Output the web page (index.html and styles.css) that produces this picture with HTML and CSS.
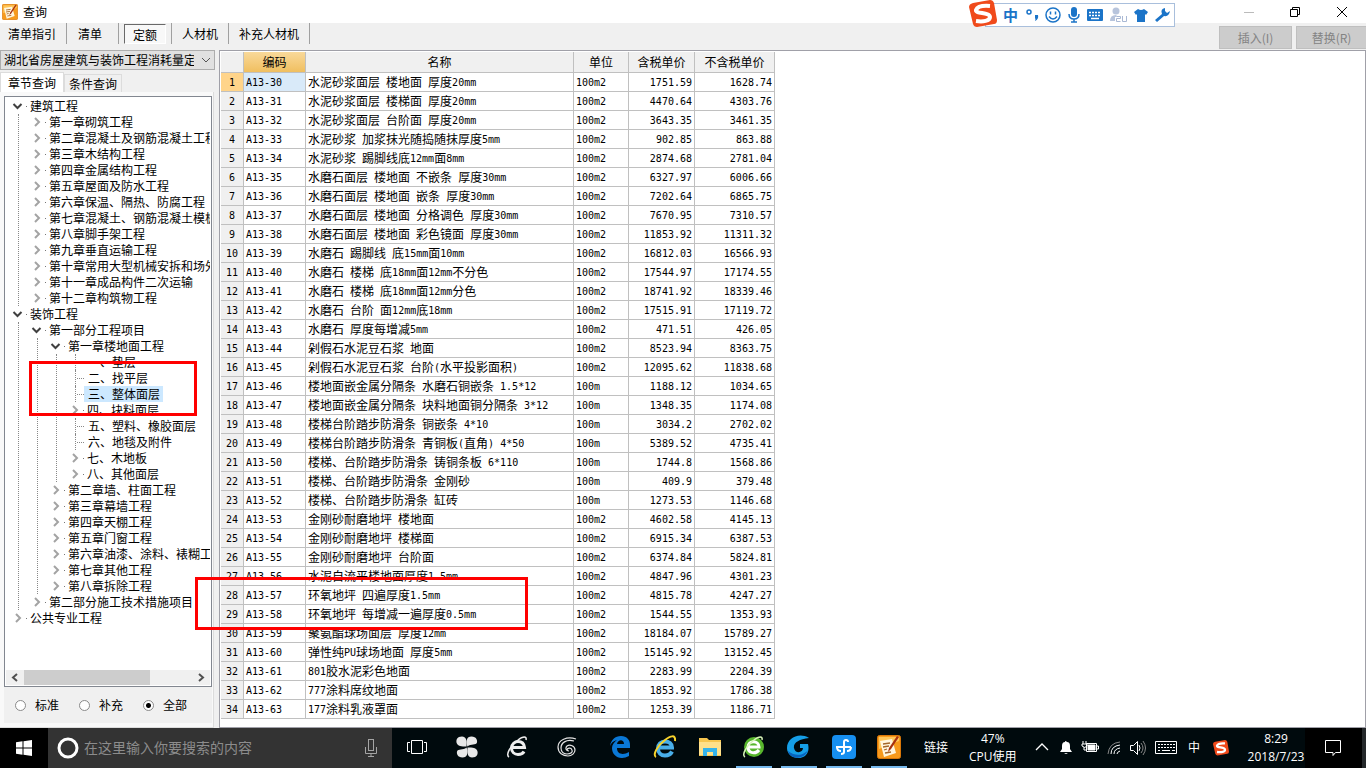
FILE: index.html
```html
<!DOCTYPE html>
<html lang="zh-CN">
<head>
<meta charset="utf-8">
<title>查询</title>
<link rel="stylesheet" href="styles.css">
</head>
<body>
<svg class="defs" aria-hidden="true">
  <symbol id="open" viewBox="0 0 19 16"><path d="M5.500 6l4 4 4-4" fill="none" stroke="#404040" stroke-width="2"/><path d="M18 8h1v1h-1z" fill="#777"/></symbol>
  <symbol id="shut" viewBox="0 0 19 16"><path d="M8 4l4 4-4 4" fill="none" stroke="#a3a3a3" stroke-width="2"/><path d="M18 8h1v1h-1z" fill="#777"/></symbol>
  <symbol id="note" viewBox="0 0 24 24"><rect x=".5" y=".5" width="23" height="23" rx="2" fill="#f79a1c" stroke="#d97708"/><path d="M2 2h20v4L2 14z" fill="#ffc65a"/><path d="M3 6l12-2 4 14-12 4z" fill="#fff6df"/><path d="M6 9l7-1M6 12l6-1M7 15l3-1M8 18l6-1" stroke="#a5672a" stroke-width="1.300"/><path d="M20 1l2 1-8 12-3 3 1-4z" fill="#a83210"/></symbol>
  <symbol id="sogou" viewBox="0 0 28 28"><path d="M4 3l17-3q3 0 4 3l3 17q0 4-3 4L8 27q-3 0-4-3L0 7q0-3 4-4z" fill="#f04a1b"/><path d="M21 6Q9 5 7 10c-1 4 14 2 14 7 0 4-7 5-14 4" fill="none" stroke="#fff" stroke-width="4"/></symbol>
</svg>

<header class="titlebar">
  <svg class="app-icon"><use href="#note"/></svg>
  <h1>查询</h1>
  <div class="window-controls">
    <button aria-label="最小化"><svg width="12" height="12"><path d="M1 6.500h10" stroke="#bbb"/></svg></button>
    <button aria-label="还原"><svg width="12" height="12" fill="none" stroke="#000"><path d="M1.500 3.500h7v7h-7zM3.500 3V1.500h7v7H9"/></svg></button>
    <button aria-label="关闭"><svg width="12" height="12"><path d="M1 1l10 10M11 1L1 11" stroke="#000"/></svg></button>
  </div>
</header>

<nav class="toolbar">
  <button>清单指引</button>
  <button>清单</button>
  <button class="pressed"><span>定额</span></button>
  <button>人材机</button>
  <button>补充人材机</button>
  <div class="actions">
    <button disabled>插入(I)</button>
    <button disabled>替换(R)</button>
  </div>
</nav>

<main class="workspace">
  <aside class="sidebar">
    <select class="library" aria-label="定额库"><option>湖北省房屋建筑与装饰工程消耗量定额</option></select>
    <div class="tabs"><button class="active">章节查询</button><button>条件查询</button></div>
    <section class="panel">
      <div class="tree-box">
        <ul class="tree">
          <li><p><svg><use href="#open"/></svg><span>建筑工程</span></p>
            <ul>
              <li><p><svg><use href="#shut"/></svg><span>第一章砌筑工程</span></p></li>
              <li><p><svg><use href="#shut"/></svg><span>第二章混凝土及钢筋混凝土工程</span></p></li>
              <li><p><svg><use href="#shut"/></svg><span>第三章木结构工程</span></p></li>
              <li><p><svg><use href="#shut"/></svg><span>第四章金属结构工程</span></p></li>
              <li><p><svg><use href="#shut"/></svg><span>第五章屋面及防水工程</span></p></li>
              <li><p><svg><use href="#shut"/></svg><span>第六章保温、隔热、防腐工程</span></p></li>
              <li><p><svg><use href="#shut"/></svg><span>第七章混凝土、钢筋混凝土模板</span></p></li>
              <li><p><svg><use href="#shut"/></svg><span>第八章脚手架工程</span></p></li>
              <li><p><svg><use href="#shut"/></svg><span>第九章垂直运输工程</span></p></li>
              <li><p><svg><use href="#shut"/></svg><span>第十章常用大型机械安拆和场外</span></p></li>
              <li><p><svg><use href="#shut"/></svg><span>第十一章成品构件二次运输</span></p></li>
              <li><p><svg><use href="#shut"/></svg><span>第十二章构筑物工程</span></p></li>
            </ul>
          </li>
          <li><p><svg><use href="#open"/></svg><span>装饰工程</span></p>
            <ul>
              <li><p><svg><use href="#open"/></svg><span>第一部分工程项目</span></p>
                <ul>
                  <li><p><svg><use href="#open"/></svg><span>第一章楼地面工程</span></p>
                    <ul>
                      <li><p class="leaf"><span>一、垫层</span></p></li>
                      <li><p class="leaf"><span>二、找平层</span></p></li>
                      <li><p class="leaf"><span class="selected">三、整体面层</span></p></li>
                      <li><p><svg><use href="#shut"/></svg><span>四、块料面层</span></p></li>
                      <li><p class="leaf"><span>五、塑料、橡胶面层</span></p></li>
                      <li><p class="leaf"><span>六、地毯及附件</span></p></li>
                      <li><p><svg><use href="#shut"/></svg><span>七、木地板</span></p></li>
                      <li><p><svg><use href="#shut"/></svg><span>八、其他面层</span></p></li>
                    </ul>
                  </li>
                  <li><p><svg><use href="#shut"/></svg><span>第二章墙、柱面工程</span></p></li>
                  <li><p><svg><use href="#shut"/></svg><span>第三章幕墙工程</span></p></li>
                  <li><p><svg><use href="#shut"/></svg><span>第四章天棚工程</span></p></li>
                  <li><p><svg><use href="#shut"/></svg><span>第五章门窗工程</span></p></li>
                  <li><p><svg><use href="#shut"/></svg><span>第六章油漆、涂料、裱糊工程</span></p></li>
                  <li><p><svg><use href="#shut"/></svg><span>第七章其他工程</span></p></li>
                  <li><p><svg><use href="#shut"/></svg><span>第八章拆除工程</span></p></li>
                </ul>
              </li>
              <li><p><svg><use href="#shut"/></svg><span>第二部分施工技术措施项目</span></p></li>
            </ul>
          </li>
          <li><p><svg><use href="#shut"/></svg><span>公共专业工程</span></p></li>
        </ul>
        <div class="scrollbar">
          <svg width="18" height="15"><path d="M11 4L7 7.500l4 3.500" fill="none" stroke="#505050" stroke-width="2"/></svg>
          <div class="track"><div class="thumb"></div></div>
          <svg width="18" height="15"><path d="M7 4l4 3.500L7 11" fill="none" stroke="#505050" stroke-width="2"/></svg>
        </div>
      </div>
      <div class="scope">
        <label><input type="radio" name="scope">标准</label>
        <label><input type="radio" name="scope">补充</label>
        <label><input type="radio" name="scope" checked>全部</label>
      </div>
    </section>
  </aside>

  <section class="results">
    <table>
      <colgroup><col class="c-no"><col class="c-code"><col class="c-name"><col class="c-unit"><col class="c-tax"><col class="c-net"></colgroup>
      <thead><tr><th></th><th class="current">编码</th><th>名称</th><th>单位</th><th>含税单价</th><th>不含税单价</th></tr></thead>
      <tbody id="rows"></tbody>
    </table>
  </section>
</main>

<footer class="taskbar">
  <button class="start" aria-label="开始"><svg width="16" height="16" fill="#fff"><path d="M0 2.300l6.500-1v6.200H0zM7.500 1.200L16 0v7.500H7.500zM0 8.500h6.500v6.200l-6.500-1zM7.500 8.500H16V16l-8.500-1.200z"/></svg></button>
  <div class="search">
    <svg width="22" height="22"><circle cx="11" cy="11" r="9" fill="none" stroke="#fff" stroke-width="3"/></svg>
    <input type="text" placeholder="在这里输入你要搜索的内容" aria-label="搜索">
    <svg width="12" height="18" fill="none" stroke="#a5a5a5"><rect x="3.500" y=".5" width="5" height="11"/><path d="M.5 8v6.500h11V8M6 15v2M3 17.500h6"/></svg>
  </div>
  <div class="shortcuts">
    <button aria-label="任务视图"><svg width="20" height="14" fill="none" stroke="#fff"><path d="M4.500.5h11v13h-11zM3 2.500H.5v9H3M17 2.500h2.500v9H17"/></svg></button>
    <button aria-label="风扇"><svg width="22" height="22" fill="#e8e8e8"><path d="M10.500 10.500C11 4 10 .5 6 .5 1 .5 0 4 .5 6.500c1 4 5 4 10 4z"/><path d="M11.500 10.500c-2-5-1-10 4-10 5 0 6 4 5.500 6-1 3-6 1-9.500 4z"/><path d="M11.500 11.500c-.5 6.500.5 10 4.500 10 5 0 6-3.500 5.500-6-1-4-5-4-10-4z"/><path d="M10.500 11.500c2 5 1 10-4 10-5 0-6-4-5.500-6 1-3 6-1 9.500-4z"/></svg></button>
    <button aria-label="浏览器"><svg width="22" height="24" fill="none" stroke="#eee"><path d="M5.500 12.500H18.500C18 8 15 6.500 12 6.500S5.500 9 5.500 13s3 6.500 6.500 6.500c3 0 5-1 6-3" stroke-width="3"/><path d="M3 22C-1 20 5 10 12 5c5-4 9-4 8 0" stroke-width="1.500"/></svg></button>
    <button aria-label="旋涡"><svg width="20" height="20" fill="none" stroke="#e4e4e4" stroke-width="1.200"><path d="M19 2C10-1 1 3 1 10c0 6 5 9 10 9 4 0 7-3 7-6 0-4-5-6-8-4-2 2-1 5 2 5"/><path d="M17 4C9 2 4 6 4 11c0 4 3 6 6 6 4 0 6-2 5-4-1-3-5-2-5 0"/></svg></button>
    <button class="group-start" aria-label="Edge"><svg width="20" height="22" fill="#0a78d6"><path fill-rule="evenodd" d="M0 10C1 4 5 0 11 0c6 0 9 4 9 9v3H7c0 7 7 7 12 4v4c-9 5-17 0-17-8 0-3 2-6 5-8-4 1-6 3-7 6zm7-2h7c0-5-6-5-7 0z"/></svg></button>
    <button aria-label="Internet Explorer"><svg width="24" height="24" fill="none"><path d="M6 12.500h13c0-4-3-6-7-6s-7 3-7 7 3 7 7 7c4 0 6-2 7-4" stroke="#49aee9" stroke-width="4"/><path d="M3 22C-1 20 5 10 12 5c5-4 11-6 10 1" stroke="#f8d32b" stroke-width="2"/></svg></button>
    <button aria-label="文件资源管理器"><svg width="22" height="18"><path d="M0 0h8l2 2h12v16H0z" fill="#f7c64f"/><path d="M0 4h22v13H0z" fill="#ffe08a"/><path d="M4 18v-8h14v8h-4v-4H8v4z" fill="#35b3ea"/></svg></button>
    <button class="running" aria-label="安全浏览器"><svg width="24" height="24" fill="none"><circle cx="12" cy="12" r="10" fill="#58b62d"/><path d="M7 12h10c0-7-11-7-11 0 0 7 8 7 11 3" stroke="#fff" stroke-width="3"/><path d="M3 22C-1 20 5 10 12 5c5-4 9-4 8 0" stroke="#d8f5b8" stroke-width="1.500"/></svg></button>
    <button class="running" aria-label="广联达"><svg width="24" height="24"><path d="M22 3C12-3 0 3 0 13c0 6 5 10 11 10 8 0 12-6 10-14h-8v4h3c0 5-8 6-9 0C6 8 12 4 22 3z" fill="#159fe8"/><path d="M1 16c2 9 17 9 20-1-3 4-11 8-20 1z" fill="#0863bf"/></svg></button>
    <button class="running" aria-label="十字"><svg width="24" height="24" fill="none"><rect width="24" height="24" rx="4" fill="#168ff0"/><path d="M16 7q0-2-2-2t-2 2v10q0 2-3 2M4 12h15M5 12q0 4 4 4M19 12q0 4-4 4" stroke="#fff" stroke-width="2"/></svg></button>
    <button class="running" aria-label="计价软件"><svg width="24" height="24"><use href="#note"/></svg></button>
  </div>
  <div class="links">链接</div>
  <div class="cpu"><span>47%</span><span>CPU使用</span></div>
  <div class="tray">
    <svg fill="none" stroke="#fff" stroke-width="1.300"><path d="M6 13l6-6 6 6"/></svg>
    <svg fill="#fff"><path d="M6 15l2-3V9q0-4 3-4 0-2 2 0 3 0 3 4v3l2 3zM10 16h4l-2 1z"/></svg>
    <svg fill="none" stroke="#fff"><path d="M8.500 6.500h10v8h-10zM19 9h1.500v3H19M5 4v3M8 4v3M4 7h5v2q-2 3-5 0zM6 10v3h2"/><path d="M10 8h7v5h-7z" fill="#fff"/></svg>
    <svg fill="none" stroke="#fff"><path d="M6 17Q7 6 18 5" stroke="#888"/><path d="M9 17q0-8 9-9M12 17q0-5 6-6M15 17q0-2 3-3"/></svg>
    <svg fill="none" stroke="#fff"><path d="M4.500 8.500h3l4-4v13l-4-4h-3zM13 8q2 3 0 6"/><path d="M15 6q4 5 0 10M17 4q5 7 0 14" stroke="#888"/></svg>
    <svg class="wide" fill="none" stroke="#fff"><path d="M5.500 4.500h21v12h-21z"/><path d="M8 7.500h17M8 10.500h17" stroke-dasharray="2 1"/><path d="M8 13.500h2M12 13.500h8M22 13.500h3"/></svg>
    <span class="ime">中</span>
    <svg class="sogou-tray" viewBox="0 0 28 28"><use href="#sogou"/></svg>
  </div>
  <div class="clock"><span>8:29</span><span>2018/7/23</span></div>
  <button class="notices" aria-label="通知"><svg width="16" height="16" fill="none" stroke="#fff"><path d="M.5.500h15v12h-5l-2.500 3v-3H.5z"/></svg></button>
</footer>

<div class="ime-bar">
  <svg class="ime-logo"><use href="#sogou"/></svg>
  <span>中</span>
  <svg width="14" height="16"><circle cx="4" cy="5" r="2" fill="none" stroke="#1b74c8" stroke-width="1.500"/><path d="M10 8h3q1 4-3 6 1-2 0-3z" fill="#1b74c8"/></svg>
  <svg width="16" height="16" fill="none" stroke="#1b74c8" stroke-width="1.500"><circle cx="8" cy="8" r="7"/><path d="M5.500 4.500v3M10.500 4.500v3M4 9.500q4 5 8 0"/></svg>
  <svg width="12" height="16"><rect x="3" width="6" height="10" rx="3" fill="#1b74c8"/><path d="M1 7q0 5 5 5t5-5M6 12v3M3 15h6" fill="none" stroke="#1b74c8" stroke-width="1.500"/></svg>
  <svg width="16" height="16"><rect y="2" width="16" height="12" rx="1" fill="#1b74c8"/><path d="M2 5.500h12M2 8.500h12" stroke="#fff" stroke-width="1.500" stroke-dasharray="2 1"/><path d="M4 11.500h8" stroke="#fff" stroke-width="1.500"/></svg>
  <svg width="18" height="16" fill="#b7c4dc"><circle cx="6" cy="4" r="3.500"/><path d="M0 14q0-6 6-6h3v6z"/><path d="M6.500 9.500h4v2h-4v3h4M12.500 9v5.500h4V9" fill="none" stroke="#fff" stroke-width="3"/><path d="M6.500 9.500h4v2h-4v3h4M12.500 9v5.500h4V9" fill="none" stroke="#a9b8d4"/></svg>
  <svg width="14" height="16"><path d="M4 2q3 2 6 0l4 3-2 3-1-1v8H3V7L2 8 0 5z" fill="#1b74c8"/></svg>
  <svg width="15" height="16"><path d="M10 1q-5 1-3 6l-7 6 2 2 7-6q5 1 6-5l-3 2-2-2z" fill="#1b74c8"/></svg>
</div>
<div class="mark mark-chapter"></div>
<div class="mark mark-rows"></div>
<script src="rows.js"></script>
</body>
</html>
```

FILE: styles.css
```css
* { box-sizing: border-box; }
body {
  margin: 0;
  min-height: 100vh;
  display: flex;
  flex-direction: column;
  position: relative;
  overflow-x: hidden;
  background: #f0f0f0;
  color: #000;
  font: 12px/16px "Noto Sans CJK SC", sans-serif;
}
button, input, select { font: inherit; color: inherit; }
button { border: 0; padding: 0; background: none; }
ul, p, h1 { margin: 0; padding: 0; list-style: none; font-size: 12px; font-weight: 400; }
svg { flex: none; display: block; }
.defs { position: absolute; width: 0; height: 0; }

.titlebar { display: flex; align-items: center; height: 23px; padding-left: 2px; gap: 5px; background: #fff; }
.app-icon { width: 16px; height: 16px; }
.window-controls { display: flex; margin-left: auto; }
.window-controls button { width: 46px; height: 20px; display: grid; place-items: center; }
.window-controls button:last-child { width: 48px; }

.toolbar { display: flex; height: 27px; align-items: flex-start; }
.toolbar > button { height: 21px; padding: 0 10px; border-right: 1px solid #a0a0a0; }
.toolbar > button:first-child { padding-left: 8px; }
.toolbar > button:nth-child(2) { padding: 0 16px 0 11px; }
.toolbar > .pressed { padding: 0 5px; }
.pressed span { display: block; width: 42px; height: 20px; padding-top: 2px; background: #f8f8f8; border: 1px solid #fff; border-top-color: #696969; border-left-color: #696969; }
.actions { display: flex; gap: 4px; margin-left: auto; padding-top: 3px; }
.actions button { width: 73px; height: 23px; background: #ccc; border: 1px solid #bfbfbf; color: #838383; }
.actions button:last-child { width: 70px; border-right: 0; }

.workspace { flex: 1; display: flex; gap: 4px; }
.sidebar { width: 215px; flex: none; display: flex; flex-direction: column; }
.library {
  width: 215px; height: 20px; padding: 0 20px 0 3px;
  appearance: none; border: 1px solid #adadad; border-radius: 0; overflow: hidden;
  background: #e1e1e1 url("data:image/svg+xml,%3Csvg xmlns='http://www.w3.org/2000/svg' width='10' height='6'%3E%3Cpath d='M1 1l4 4 4-4' fill='none' stroke='%23555'/%3E%3C/svg%3E") no-repeat right 3px center;
}
.tabs { display: flex; align-items: flex-end; height: 22px; }
.tabs button { height: 18px; padding: 0 4px; background: #f0f0f0; border: 1px solid #dcdcdc; border-bottom: 0; }
.tabs .active { height: 20px; padding: 0 7px; background: #fff; }
.panel { flex: 1; display: flex; flex-direction: column; width: 214px; padding: 4px 1px 4px 4px; background: #f9f9f9; border: 1px solid #dcdcdc; border-left: 0; border-top: 0; }
.tree-box { flex: 1; display: flex; flex-direction: column; padding: 1px; background: #fff; border: 1px solid #828790; overflow: hidden; }
.tree { flex: 1; padding-left: 2px; overflow: hidden; white-space: nowrap; }
.tree ul { margin-left: 10px; padding-left: 8px; border-left: 1px dotted #888; }
.tree p { display: flex; height: 16px; }
.tree p svg { width: 19px; height: 16px; }
.tree p span { padding: 0 3px; }
.tree .selected { background: #cce8ff; }
.leaf::before { content: ""; width: 9px; height: 16px; margin-left: 10px; border-left: 1px dotted #888; background: repeating-linear-gradient(90deg, transparent 0 1px, #888 1px 2px) 0 8px / 9px 1px no-repeat; }
.leaf .selected { margin-left: -1px; padding-left: 4px; }
.scrollbar { display: flex; height: 15px; background: #f0f0f0; }
.track { flex: 1; }
.thumb { width: 75%; height: 15px; background: #cdcdcd; }
.scope { display: flex; align-items: center; gap: 16px; height: 36px; padding-left: 11px; background: #f0f0f0; }
.scope label { display: flex; align-items: center; gap: 9px; width: 48px; white-space: nowrap; }
.scope input { appearance: none; flex: none; width: 11px; height: 11px; margin: 0; border: 1px solid #8a8a8a; border-radius: 50%; background: #fff; }
.scope input:checked { background: radial-gradient(circle, #000 2px, #fff 3px); }

.results { flex: 1; padding: 1px 1px 8px; background: #fff; border: 1px solid #a0a0a8; }
table { width: 554px; table-layout: fixed; border-collapse: separate; border-spacing: 0; }
.c-no { width: 23px; }
.c-code { width: 62px; }
.c-name { width: 268px; }
.c-unit { width: 55px; }
.c-tax { width: 66px; }
.c-net { width: 80px; }
th, td { height: 19px; padding: 0 2px; line-height: 18px; font-weight: 400; white-space: nowrap; border: solid #c0c0c0; border-width: 0 1px 1px 0; }
thead th { height: 21px; line-height: 20px; background: #f0f0f0; }
thead .current { background: linear-gradient(#f9d99a, #f0bf60); }
tbody th { padding: 0; background: #f0f0f0; }
tbody .current { background: #ffd48a; }
tbody .current + td { background: #d9eaf9; }
.num { text-align: right; }
.mono { font: 10px/10px "DejaVu Sans Mono", monospace; white-space: pre; vertical-align: 1px; }

.taskbar { display: flex; height: 40px; background: #000a0d; color: #fff; font-family: "Open Sans", "Noto Sans CJK SC", sans-serif; white-space: nowrap; }
.taskbar > * { flex: none; }
.start { width: 48px; display: grid; place-items: center; background: #000; }
.search { width: 344px; display: flex; align-items: center; gap: 5px; padding: 0 15px 0 9px; background: #333; }
.search input { flex: 1; min-width: 0; padding: 0; border: 0; background: none; font-size: 14px; }
.search input::placeholder { color: #8c8c8c; opacity: 1; }
.shortcuts { display: flex; }
.shortcuts button { width: 45px; display: grid; place-items: center; border-bottom: 2px solid transparent; }
.shortcuts button:nth-child(-n+4) { width: 50px; }
.shortcuts .group-start { margin-left: 5px; }
.shortcuts .running { width: 36px; margin-right: 9px; border-bottom-color: #76b9ed; }
.shortcuts button:nth-child(8) { margin-left: 4px; }
.links { align-self: center; margin-left: 8px; }
.cpu, .clock { display: flex; flex-direction: column; align-items: center; justify-content: center; line-height: 18px; }
.cpu { margin-left: 21px; }
.tray { display: flex; align-items: center; margin-left: auto; }
.tray svg { width: 24px; height: 22px; }
.tray .wide { width: 32px; }
.tray .ime { width: 24px; text-align: center; }
.tray .sogou-tray { width: 16px; height: 16px; margin: 0 7px; }
.clock { width: 58px; margin-left: 11px; }
.notices { width: 61px; display: grid; place-items: center start; padding-left: 20px; background: #000; border-right: 4px solid #24282a; }

.ime-bar { position: absolute; top: 3px; right: 191px; width: 190px; height: 24px; display: flex; align-items: center; justify-content: space-between; padding: 0 4px 0 17px; background: #fff; border: 1px solid #a9bfdc; color: #1b74c8; }
.ime-bar span { font-size: 15px; font-weight: 700; }
.ime-logo { position: absolute; left: -17px; top: -4px; width: 28px; height: 28px; }
.mark { position: absolute; border: 3px solid #f00; pointer-events: none; }
.mark-chapter { left: 29px; top: 361px; width: 168px; height: 55px; }
.mark-rows { left: 195px; top: 577px; width: 333px; height: 53px; }
```

FILE: rows.js
```js
const items = `水泥砂浆面层 楼地面 厚度20mm|100m2|1751.59|1628.74
水泥砂浆面层 楼梯面 厚度20mm|100m2|4470.64|4303.76
水泥砂浆面层 台阶面 厚度20mm|100m2|3643.35|3461.35
水泥砂浆 加浆抹光随捣随抹厚度5mm|100m2|902.85|863.88
水泥砂浆 踢脚线底12mm面8mm|100m2|2874.68|2781.04
水磨石面层 楼地面 不嵌条 厚度30mm|100m2|6327.97|6006.66
水磨石面层 楼地面 嵌条 厚度30mm|100m2|7202.64|6865.75
水磨石面层 楼地面 分格调色 厚度30mm|100m2|7670.95|7310.57
水磨石面层 楼地面 彩色镜面 厚度30mm|100m2|11853.92|11311.32
水磨石 踢脚线 底15mm面10mm|100m2|16812.03|16566.93
水磨石 楼梯 底18mm面12mm不分色|100m2|17544.97|17174.55
水磨石 楼梯 底18mm面12mm分色|100m2|18741.92|18339.46
水磨石 台阶 面12mm底18mm|100m2|17515.91|17119.72
水磨石 厚度每增减5mm|100m2|471.51|426.05
剁假石水泥豆石浆 地面|100m2|8523.94|8363.75
剁假石水泥豆石浆 台阶(水平投影面积)|100m2|12095.62|11838.68
楼地面嵌金属分隔条 水磨石铜嵌条 1.5*12|100m|1188.12|1034.65
楼地面嵌金属分隔条 块料地面铜分隔条 3*12|100m|1348.35|1174.08
楼梯台阶踏步防滑条 铜嵌条 4*10|100m|3034.2|2702.02
楼梯台阶踏步防滑条 青铜板(直角) 4*50|100m|5389.52|4735.41
楼梯、台阶踏步防滑条 铸铜条板 6*110|100m|1744.8|1568.86
楼梯、台阶踏步防滑条 金刚砂|100m|409.9|379.48
楼梯、台阶踏步防滑条 缸砖|100m|1273.53|1146.68
金刚砂耐磨地坪 楼地面|100m2|4602.58|4145.13
金刚砂耐磨地坪 楼梯面|100m2|6915.34|6387.53
金刚砂耐磨地坪 台阶面|100m2|6374.84|5824.81
水泥自流平楼地面厚度1.5mm|100m2|4847.96|4301.23
环氧地坪 四遍厚度1.5mm|100m2|4815.78|4247.27
环氧地坪 每增减一遍厚度0.5mm|100m2|1544.55|1353.93
聚氨酯球场面层 厚度12mm|100m2|18184.07|15789.27
弹性纯PU球场地面 厚度5mm|100m2|15145.92|13152.45
801胶水泥彩色地面|100m2|2283.99|2204.39
777涂料席纹地面|100m2|1853.92|1786.38
177涂料乳液罩面|100m2|1253.39|1186.71`.split("\n");

// Latin runs use a half-width face so that two letters fill one Chinese cell.
const mono = (text) => text.replace(/[\x20-\x7e]+/g, '<span class="mono">$&</span>');

document.getElementById("rows").innerHTML = items.map((line, i) => {
  const [name, unit, tax, net] = line.split("|").map(mono);
  const current = i === 0 ? ' class="current"' : "";
  return `<tr><th${current}>${mono(String(i + 1))}</th><td>${mono("A13-" + (i + 30))}</td>` +
    `<td>${name}</td><td>${unit}</td><td class="num">${tax}</td><td class="num">${net}</td></tr>`;
}).join("");
```
